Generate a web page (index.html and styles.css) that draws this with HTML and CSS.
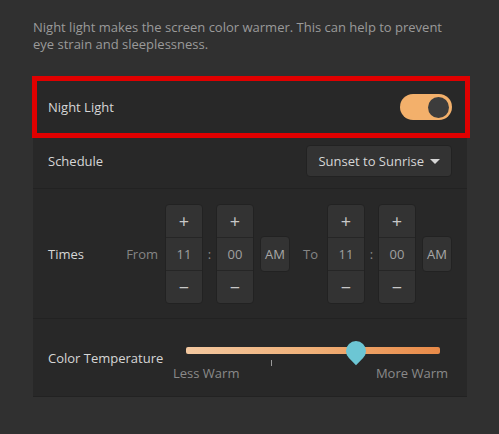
FILE: index.html
```html
<!doctype html>
<html>
    <head>
        <title>Night Light</title>
        <link rel="stylesheet" href="styles.css">
    </head>
    <body>
        <p class="desc">Night light makes the screen color warmer. This can help to prevent eye strain and sleeplessness.</p>
        <main class="card">
            <section class="row marked">
                <span class="label">Night Light</span>
                <span class="switch"><span class="knob"></span></span>
            </section>
            <section class="row schedule">
                <span class="label">Schedule</span>
                <button class="combo">Sunset to Sunrise <span class="arrow"></span></button>
            </section>
            <section class="row times">
                <span class="label">Times</span>
                <div class="clock">
                    <span class="dim">From</span>
                    <div class="spin">
                        <span class="step">+</span><span class="val">11</span><span class="step">&minus;</span>
                    </div>
                    <span class="colon">:</span>
                    <div class="spin">
                        <span class="step">+</span><span class="val">00</span><span class="step">&minus;</span>
                    </div>
                    <span class="ampm">AM</span>
                    <span class="dim to">To</span>
                    <div class="spin">
                        <span class="step">+</span><span class="val">11</span><span class="step">&minus;</span>
                    </div>
                    <span class="colon">:</span>
                    <div class="spin">
                        <span class="step">+</span><span class="val">00</span><span class="step">&minus;</span>
                    </div>
                    <span class="ampm">AM</span>
                </div>
            </section>
            <section class="row temp">
                <span class="label">Color Temperature</span>
                <div class="slider">
                    <div class="track">
                        <span class="handle"></span>
                    </div>
                    <span class="tick"></span>
                    <div class="ends">
                        <span>Less Warm</span>
                        <span>More Warm</span>
                    </div>
                </div>
            </section>
        </main>
    </body>
</html>
```

FILE: styles.css
```css
html,
body {
    margin: 0;
    background: #303030;
    font-family: "Open Sans", "Noto Sans", sans-serif;
    color: #dcdcdc;
}

body {
    padding: 19px 32px 0 33px;
}

.desc {
    max-width: 420px;
    margin: 0 0 27px 0;
    font-size: 13px;
    line-height: 17px;
    color: #9a9a9a;
}

.card {
    display: flex;
    flex-direction: column;
    width: 434px;
    background: #282828;
    border-bottom: 1px solid #222222;
}

.row {
    display: flex;
    align-items: center;
    justify-content: space-between;
    padding: 0 15px;
    border-bottom: 1px solid #222222;
    font-size: 13px;
}

.label {
    color: #d6d6d6;
}

/* red annotation frame drawn over the first row */
.marked {
    position: relative;
    height: 54px;
    box-sizing: border-box;
    padding-right: 15px;
}

.marked::after {
    content: "";
    position: absolute;
    top: -4px;
    left: -1px;
    right: -3px;
    bottom: -5px;
    border: 5px solid #e00000;
}

.switch {
    display: flex;
    align-items: center;
    justify-content: flex-end;
    width: 52px;
    height: 26px;
    box-sizing: border-box;
    padding: 0 3px;
    margin-top: 1px;
    border-radius: 13px;
    background: #f3b06b;
}

.knob {
    width: 21px;
    height: 21px;
    border-radius: 50%;
    background: #3c3c3c;
}

.schedule {
    height: 55px;
    box-sizing: border-box;
}

.combo {
    display: flex;
    align-items: center;
    gap: 6px;
    height: 32px;
    padding: 0 11px;
    border: 1px solid #222222;
    border-radius: 4px;
    background: #333333;
    color: #d6d6d6;
    font-family: inherit;
    font-size: 13px;
}

.arrow {
    width: 0;
    height: 0;
    border-left: 5px solid transparent;
    border-right: 5px solid transparent;
    border-top: 5px solid #d6d6d6;
}

.times {
    height: 130px;
    box-sizing: border-box;
}

.clock {
    display: flex;
    align-items: center;
}

.dim {
    color: #858585;
    margin-right: 7px;
}

.to {
    margin: 0 9px 0 13px;
}

.spin {
    display: flex;
    flex-direction: column;
    width: 38px;
    box-sizing: border-box;
    border: 1px solid #222222;
    border-radius: 4px;
    background: #333333;
    overflow: hidden;
}

.spin span {
    display: flex;
    align-items: center;
    justify-content: center;
    height: 32px;
}

.step {
    color: #c8c8c8;
    font-size: 18px;
}

.step + .val,
.val + .step {
    border-top: 1px solid #262626;
}

.val {
    color: #a0a0a0;
}

.colon {
    width: 13px;
    text-align: center;
    color: #8a8a8a;
}

.ampm {
    display: flex;
    align-items: center;
    justify-content: center;
    width: 30px;
    height: 36px;
    box-sizing: border-box;
    margin-left: 6px;
    border: 1px solid #222222;
    border-radius: 4px;
    background: #333333;
    color: #a8a8a8;
}

.temp {
    height: 77px;
    border-bottom: none;
}

.slider {
    position: relative;
    width: 275px;
    margin-right: 4px;
    padding-top: 13px;
}

.track {
    position: relative;
    height: 7px;
    margin: 0 8px 0 13px;
    border-radius: 2px;
    background: linear-gradient(to right, #f3c8a0, #f0b078 50%, #e98a48);
}

.handle {
    position: absolute;
    left: 160px;
    top: -6px;
    width: 20px;
    height: 20px;
    border-radius: 50% 50% 50% 0;
    transform: rotate(-45deg);
    background: #6cc6d4;
}

.tick {
    display: block;
    width: 1px;
    height: 6px;
    margin: 6px 0 0 98px;
    background: #9a9a9a;
}

.ends {
    display: flex;
    justify-content: space-between;
    margin-top: -2px;
    color: #8a8a8a;
    font-size: 13px;
}
```
